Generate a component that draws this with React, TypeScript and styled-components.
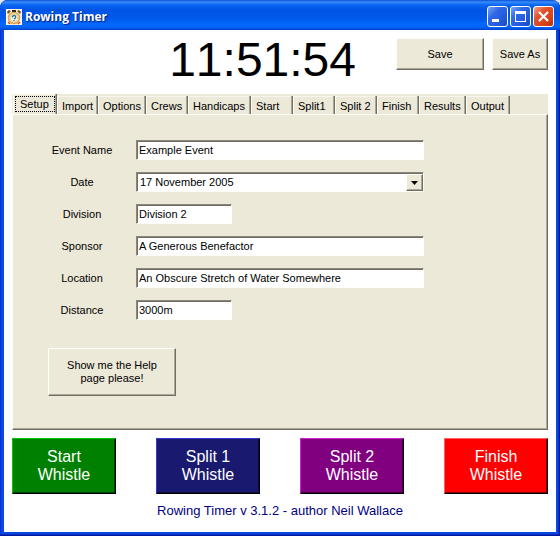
import React, { useState } from "react";
import styled, { createGlobalStyle } from "styled-components";

const face = "#ece9d8";
const shade = "#716f64";
const sans = '"Liberation Sans", Arial, sans-serif';

const GlobalStyle = createGlobalStyle`
  * { box-sizing: border-box; }
  body { margin: 0; background: #dfe6f2; font: 11px/13px ${sans}; color: #000; }
  button, input, select { font: inherit; color: inherit; margin: 0; border-radius: 0; }
`;

const Window = styled.div`
  min-height: 100vh;
  display: flex;
  flex-direction: column;
  border-radius: 8px 8px 0 0;
  overflow: hidden;
  background: #0a46e0;
  box-shadow: inset -1px -1px #00189c, inset 1px 0 #0831d9, inset -2px -2px #0630c4;
`;

const TitleBar = styled.header`
  height: 30px;
  display: flex;
  align-items: center;
  gap: 3px;
  padding: 3px 6px 0;
  background: linear-gradient(#0b50d8 0, #3a8cf8 2px, #0a66f2 5px, #0054e3 10px, #0058ea 18px, #0368fc 24px, #0364f8 27px, #0144cc 30px);
`;

const Title = styled.h1`
  flex: 1;
  margin: 0;
  font: 700 12px/18px "Open Sans", "Noto Sans", sans-serif;
  color: #fff;
  text-shadow: 1px 1px 1px #0b1f80;
`;

const Captions = styled.div`
  display: flex;
  gap: 2px;
`;

const CaptionButton = styled.button<{ $close?: boolean }>`
  width: 21px;
  height: 21px;
  padding: 0;
  border: 1px solid #fff;
  border-radius: 3px;
  display: grid;
  place-items: center;
  background: ${(p) =>
    p.$close
      ? "linear-gradient(135deg, #f0a48c, #e2532c 35%, #d8431a 70%, #b83008)"
      : "linear-gradient(135deg, #7ba4f8, #2f68e6 35%, #2559dc 70%, #1848c4)"};
`;

const Client = styled.main`
  flex: 1;
  margin: 0 4px 4px;
  padding: 8px;
  background: #fff;
`;

const Header = styled.div`
  height: 56px;
  display: flex;
  justify-content: flex-end;
  align-items: flex-start;
  gap: 8px;
`;

const Clock = styled.time`
  margin-right: 32px;
  font-size: 48px;
  line-height: 44px;
  font-kerning: none;
`;

const PushButton = styled.button<{ $width: number; $height: number }>`
  width: ${(p) => p.$width}px;
  height: ${(p) => p.$height}px;
  padding: 0 12px;
  white-space: ${(p) => (p.$width < 100 ? "nowrap" : "normal")};
  display: flex;
  align-items: center;
  justify-content: center;
  background: ${face};
  border: 1px solid;
  border-color: #fffef6 ${shade} ${shade} #fffef6;
  box-shadow: inset -1px -1px #aca899;
`;

const TabStrip = styled.div`
  height: 20px;
  display: flex;
  align-items: flex-end;
  padding-left: 1px;
  background: ${face};
`;

const Tab = styled.button<{ $width: number }>`
  width: ${(p) => p.$width}px;
  height: 18px;
  padding: 2px 0 0 4px;
  text-align: left;
  white-space: nowrap;
  background: ${face};
  border: 0 solid ${shade};
  border-right-width: 1px;
  border-left: 1px solid #fffef6;
  box-shadow: inset -1px 0 #aca899, inset 0 1px #f8f6ec;

  &[aria-selected="true"] {
    height: 20px;
    padding: 0 2px 0 6px;
    outline: 1px dotted #000;
    outline-offset: -3px;
  }
`;

const Panel = styled.section`
  padding: 25px 35px 33px;
  background: ${face};
  border: 1px solid;
  border-color: #fffef6 ${shade} ${shade} #fffef6;
  box-shadow: inset -1px -1px #aca899;
`;

const Form = styled.form`
  display: flex;
  flex-direction: column;
  gap: 12px;
`;

const Row = styled.div`
  height: 20px;
  display: flex;
  align-items: center;
  gap: 20px;
`;

const Label = styled.label`
  width: 68px;
  text-align: center;
`;

const Field = styled.div<{ $small?: boolean }>`
  width: ${(p) => (p.$small ? 96 : 288)}px;
  height: 20px;
  display: flex;
  background: #fff;
  border: 1px solid;
  border-color: #8a877a #fffef6 #fffef6 #8a877a;
  box-shadow: inset 1px 1px ${shade};
`;

const TextInput = styled.input`
  width: 100%;
  padding: 1px 2px 0;
  border: 0;
  background: transparent;
  outline: 0;
`;

const DateSelect = styled.select`
  width: 100%;
  padding: 1px 3px 0;
  border: 0;
  background: transparent;
  appearance: none;
  outline: 0;
`;

const DropArrow = styled.span`
  flex: none;
  width: 17px;
  margin: 1px 0 0;
  display: grid;
  place-items: center;
  background: ${face};
  border: 1px solid;
  border-color: #fffef6 ${shade} ${shade} #fffef6;
  box-shadow: inset -1px -1px #aca899;
  pointer-events: none;
`;

const HelpRow = styled.div`
  margin-top: 28px;
`;

const Whistles = styled.div`
  margin-top: 8px;
  display: flex;
  justify-content: space-between;
`;

const Whistle = styled.button<{ $color: string; $light: string; $dark: string }>`
  width: 104px;
  height: 56px;
  padding: 0 20px;
  font-size: 16px;
  line-height: 18px;
  color: #fff;
  background: ${(p) => p.$color};
  border: 1px solid;
  border-color: ${(p) => p.$light} #000 #000 ${(p) => p.$light};
  box-shadow: inset -1px -1px ${(p) => p.$dark};
`;

const Credit = styled.footer`
  margin-top: 8px;
  font-size: 13px;
  line-height: 18px;
  text-align: center;
  color: #000080;
`;

const tabs: [string, number][] = [
  ["Setup", 44], ["Import", 41], ["Options", 48], ["Crews", 42], ["Handicaps", 63], ["Start", 42],
  ["Split1", 42], ["Split 2", 42], ["Finish", 42], ["Results", 47], ["Output", 44],
];

const fields = [
  { id: "event", label: "Event Name", value: "Example Event" },
  { id: "date", label: "Date", value: "17 November 2005", select: true },
  { id: "division", label: "Division", value: "Division 2", small: true },
  { id: "sponsor", label: "Sponsor", value: "A Generous Benefactor" },
  { id: "location", label: "Location", value: "An Obscure Stretch of Water Somewhere" },
  { id: "distance", label: "Distance", value: "3000m", small: true },
];

const whistles = [
  { name: "Start", color: "#008000", light: "#00c800", dark: "#004000" },
  { name: "Split 1", color: "#191970", light: "#3838d0", dark: "#0c0c38" },
  { name: "Split 2", color: "#800080", light: "#d020d0", dark: "#400040" },
  { name: "Finish", color: "#ff0000", light: "#ff6060", dark: "#800000" },
];

const StopwatchIcon = () => (
  <svg width="16" height="16" viewBox="0 0 16 16" aria-hidden="true">
    <rect width="16" height="16" fill="#fff8ea" />
    <path d="M6 1h4v2H6z" fill="#2c2114" />
    <path d="M1 3l2-2 2 1-3 3zM15 3l-2-2-2 1 3 3z" fill="#6b4a22" />
    <circle cx="8" cy="9" r="5.6" fill="#f6dc9c" stroke="#d9a050" strokeWidth="1.4" />
    <circle cx="8" cy="9" r="3.8" fill="#e9eee0" stroke="#e6b878" strokeWidth="1" strokeDasharray="1 1.2" />
    <path d="M6 8l1.500-1.500 2 .5V9L8 10M8 11v1" fill="none" stroke="#27788c" strokeWidth="1.200" />
    <path d="M2 13l2 2M14 13l-2 2" stroke="#d04b28" strokeWidth="1.400" />
  </svg>
);

export default function App() {
  const [active, setActive] = useState("Setup");
  return (
    <>
      <GlobalStyle />
      <Window>
        <TitleBar>
          <StopwatchIcon />
          <Title>Rowing Timer</Title>
          <Captions>
            <CaptionButton aria-label="Minimize">
              <svg width="19" height="19"><path d="M4 12h7v3H4z" fill="#fff" /></svg>
            </CaptionButton>
            <CaptionButton aria-label="Maximize">
              <svg width="19" height="19"><path d="M4 4h11v11H4zM5 7v7h9V7z" fill="#fff" fillRule="evenodd" /></svg>
            </CaptionButton>
            <CaptionButton $close aria-label="Close">
              <svg width="19" height="19"><path d="M5 5l9 9M14 5l-9 9" stroke="#fff" strokeWidth="2.200" /></svg>
            </CaptionButton>
          </Captions>
        </TitleBar>
        <Client>
          <Header>
            <Clock>11:51:54</Clock>
            <PushButton $width={88} $height={32}>Save</PushButton>
            <PushButton $width={56} $height={32}>Save As</PushButton>
          </Header>
          <TabStrip role="tablist">
            {tabs.map(([name, width]) => (
              <Tab key={name} role="tab" $width={width} aria-selected={name === active} onClick={() => setActive(name)}>
                {name}
              </Tab>
            ))}
          </TabStrip>
          <Panel role="tabpanel">
            <Form>
              {fields.map((f) => (
                <Row key={f.id}>
                  <Label htmlFor={f.id}>{f.label}</Label>
                  <Field $small={f.small}>
                    {f.select ? (
                      <>
                        <DateSelect id={f.id}><option>{f.value}</option></DateSelect>
                        <DropArrow>
                          <svg width="7" height="4"><path d="M0 0h7L3.500 4z" /></svg>
                        </DropArrow>
                      </>
                    ) : (
                      <TextInput id={f.id} type="text" defaultValue={f.value} />
                    )}
                  </Field>
                </Row>
              ))}
            </Form>
            <HelpRow>
              <PushButton $width={128} $height={48}>Show me the Help page please!</PushButton>
            </HelpRow>
          </Panel>
          <Whistles>
            {whistles.map((w) => (
              <Whistle key={w.name} $color={w.color} $light={w.light} $dark={w.dark}>{w.name} Whistle</Whistle>
            ))}
          </Whistles>
          <Credit>Rowing Timer v 3.1.2 - author Neil Wallace</Credit>
        </Client>
      </Window>
    </>
  );
}
